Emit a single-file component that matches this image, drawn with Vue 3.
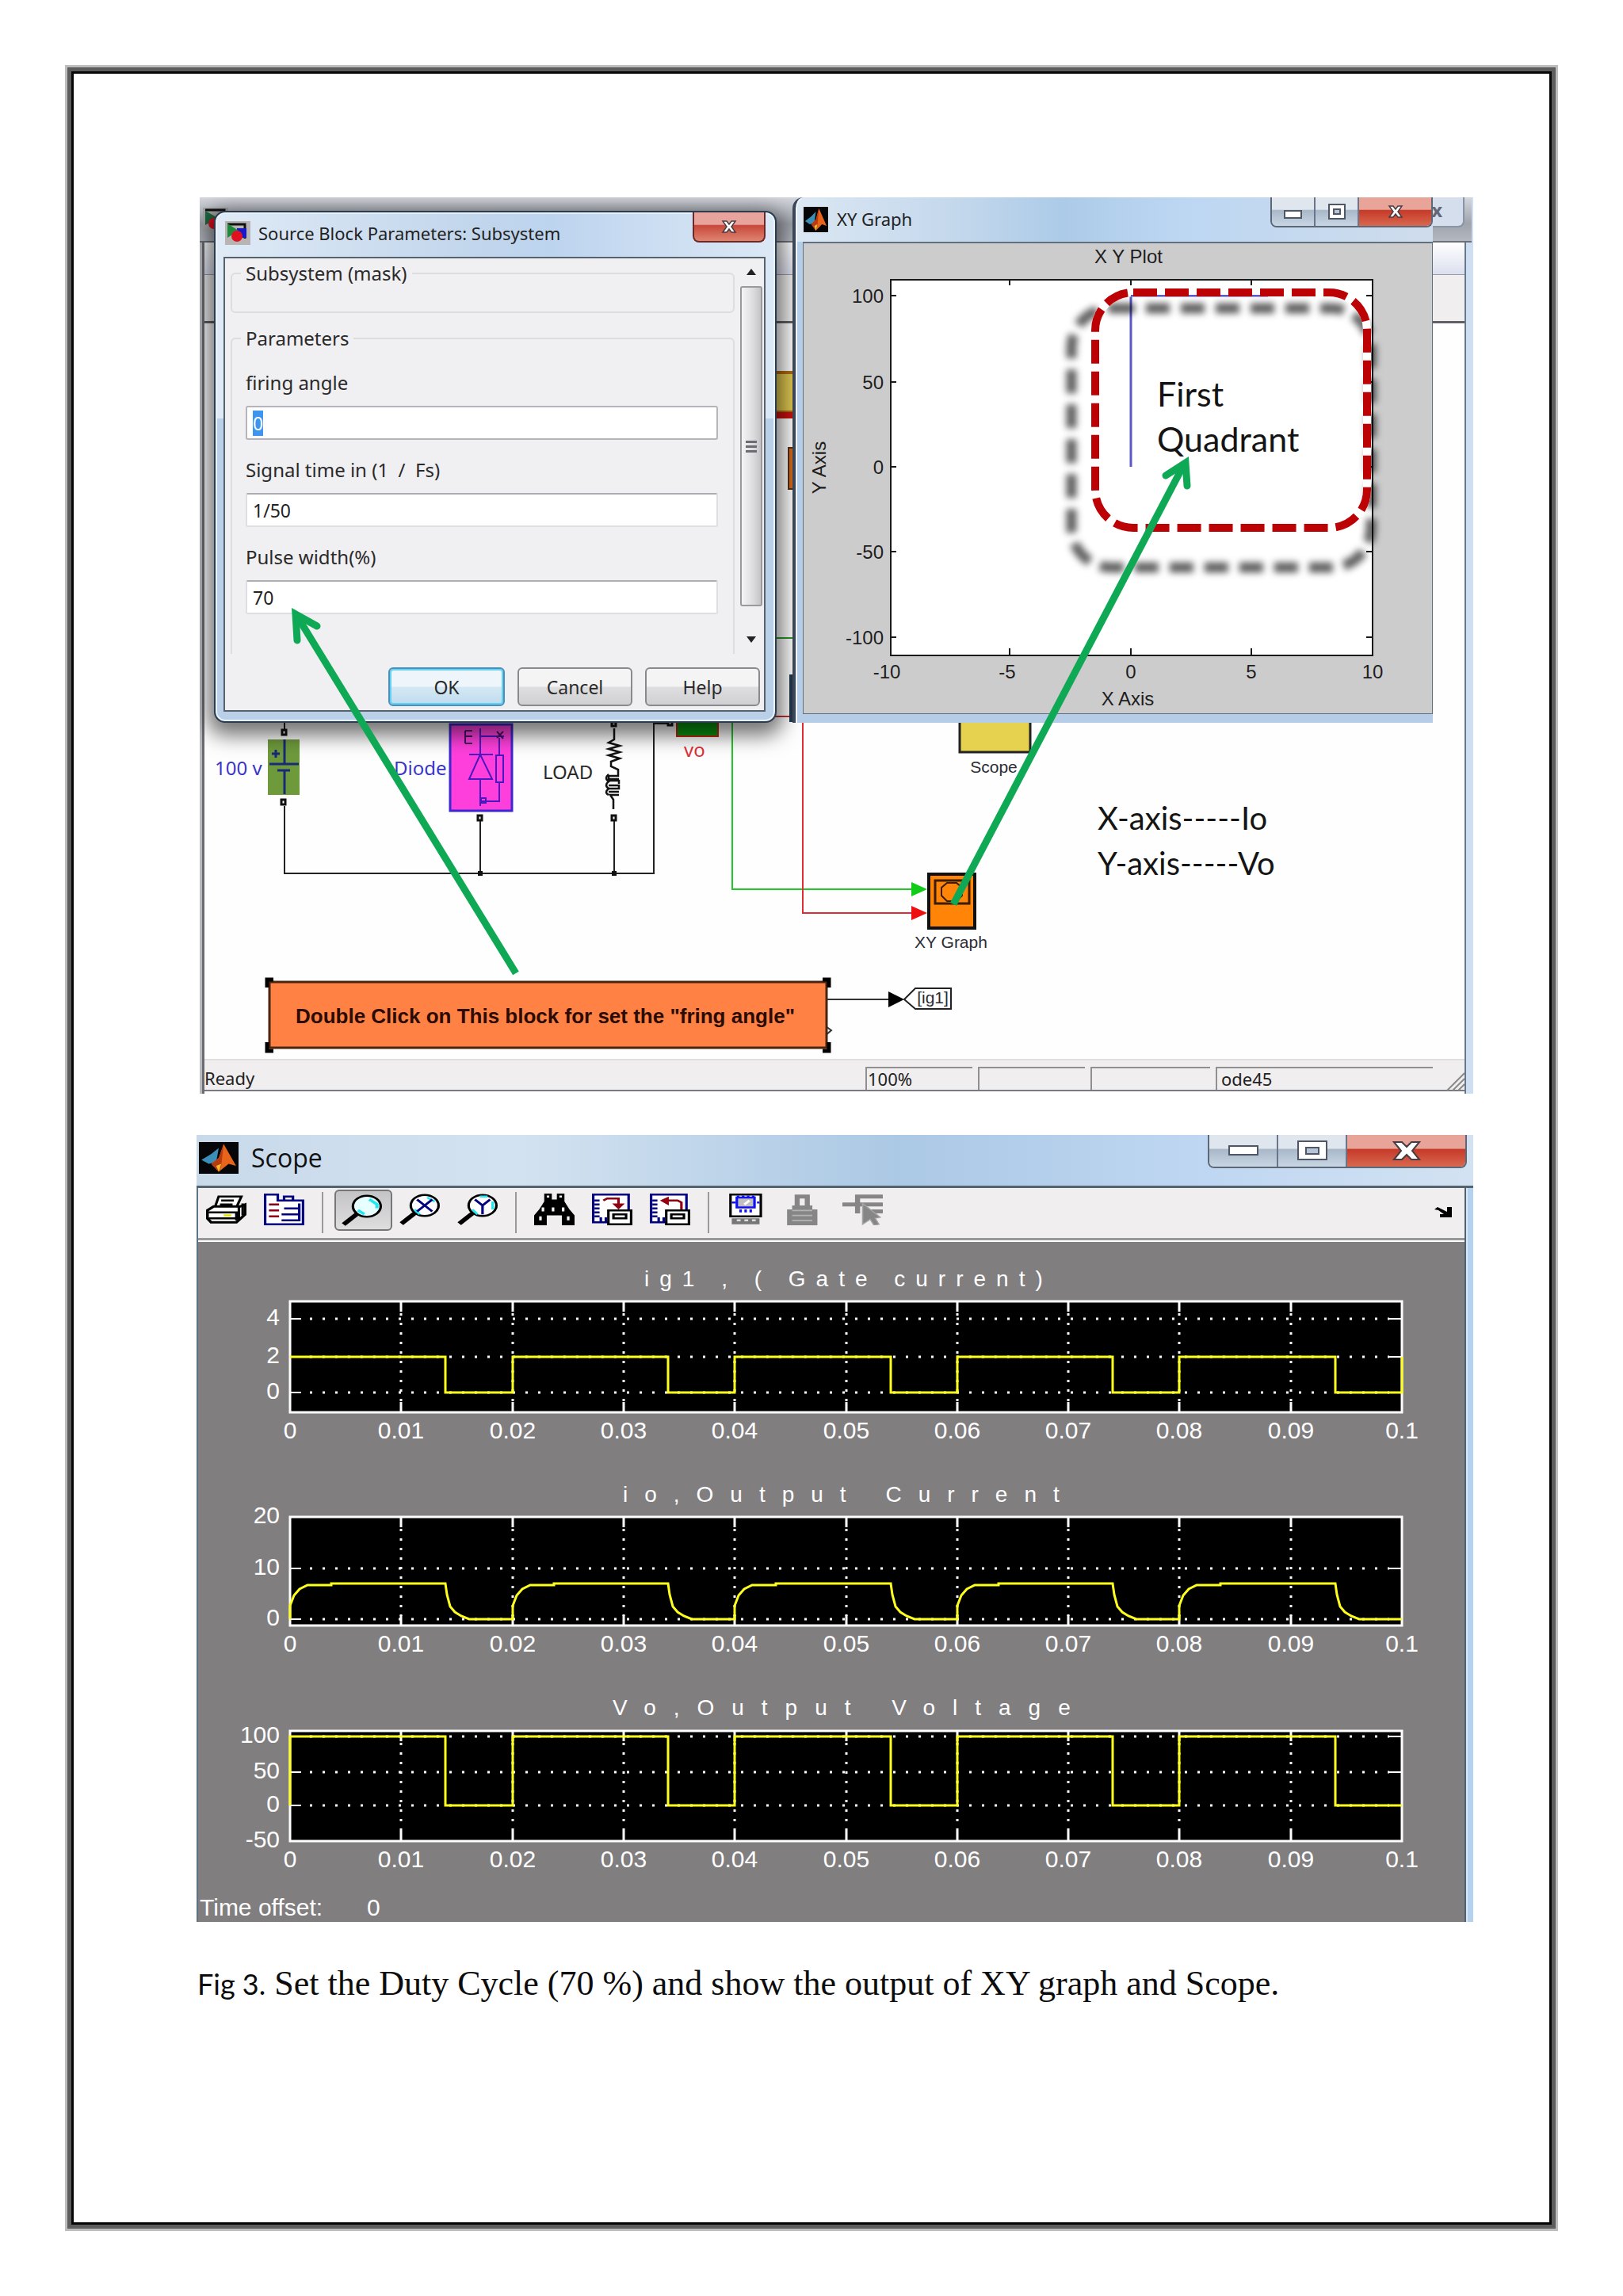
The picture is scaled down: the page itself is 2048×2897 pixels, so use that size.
<script setup>
import { onMounted, ref } from 'vue'

const fields = ref([
  { id: 'firing', label: 'firing angle', value: '0' },
  { id: 'period', label: 'Signal time in (1  /  Fs)', value: '1/50' },
  { id: 'width', label: 'Pulse width(%)', value: '70' }
])
const statusCells = [
  { text: '100%', cls: 'zoomlevel' },
  { text: '', cls: 'blank' },
  { text: '', cls: 'blank2' },
  { text: 'ode45', cls: 'solver' }
]

onMounted(() => {
  const first = document.getElementById('firing')
  first.focus({ preventScroll: true })
  first.select()
})

/* XY plot ticks; negative labels are centred on their digits */
const xyX = [
  { t: '-10', x: 1124, lx: 1119 }, { t: '-5', x: 1274, lx: 1271 }, { t: '0', x: 1427, lx: 1427 },
  { t: '5', x: 1579, lx: 1579 }, { t: '10', x: 1732, lx: 1732 }
]
const xyY = [
  { t: '100', y: 373 }, { t: '50', y: 482 }, { t: '0', y: 589 }, { t: '-50', y: 696 }, { t: '-100', y: 804 }
]

/* Scope traces */
const X0 = 366
const STEP = 140.3
const XE = 1769
const at = n => Math.round(X0 + n * STEP)
const ticks = ['0', '0.01', '0.02', '0.03', '0.04', '0.05', '0.06', '0.07', '0.08', '0.09', '0.1']

function square(hi, lo) {
  let d = ''
  for (let k = 0; k < 5; k++) {
    const a = at(2 * k)
    const b = at(2 * k + 1.4)
    const c = at(2 * k + 2)
    d += `${k ? 'L' : 'M'}${a} ${k ? lo : hi}V${hi}H${b}V${lo}H${c}`
  }
  return d
}
function rounded(hi, lo) {
  let d = ''
  for (let k = 0; k < 5; k++) {
    const a = at(2 * k)
    const b = at(2 * k + 1.4)
    const c = at(2 * k + 2)
    d += `${k ? 'L' : 'M'}${a} ${lo}V${lo - 17}L${a + 5} ${lo - 30}L${a + 12} ${hi + 7}L${a + 22} ${hi + 2}H${a + 52}V${hi}H${b}`
    d += `L${b + 2} ${hi + 14}L${b + 6} ${hi + 29}L${b + 12} ${hi + 36}L${b + 20} ${hi + 41}L${b + 30} ${lo}H${c}`
  }
  return d
}
const plots = [
  {
    title: 'ig1 , ( Gate current)', tx: 813, ty: 1623, cls: 'tight', top: 1642, bottom: 1782, lx: 1815,
    ys: [{ t: '4', y: 1664 }, { t: '2', y: 1712 }, { t: '0', y: 1757 }], trace: square(1712, 1757) + 'V1712'
  },
  {
    title: 'io,Output Current', tx: 786, ty: 1895, cls: 'loose', top: 1914, bottom: 2051, lx: 2084,
    ys: [{ t: '20', y: 1914, edge: true }, { t: '10', y: 1979 }, { t: '0', y: 2043 }], trace: rounded(1998, 2043)
  },
  {
    title: 'Vo,Output Voltage', tx: 773, ty: 2164, cls: 'looser', top: 2184, bottom: 2323, lx: 2356,
    ys: [{ t: '100', y: 2191 }, { t: '50', y: 2236 }, { t: '0', y: 2278 }, { t: '-50', y: 2323, edge: true }],
    trace: 'M366 2278' + square(2191, 2278).replace('M', 'L')
  }
]
</script>

<template>
  <main class="page">
    <article class="sheet">
      <section class="model" aria-label="Simulink model">
        <header class="model-title">
          <svg class="sl-icon back-icon" viewBox="0 0 32 30" aria-hidden="true">
            <rect width="32" height="30" fill="#a9a9a9" /><path d="M3 3h24v20" fill="none" stroke="#111" stroke-width="3" />
            <path d="M3 4v18l16-9z" fill="#1d6b42" /><circle cx="14" cy="20" r="7" fill="#e01020" />
          </svg>
          <span class="ghost-close">x</span>
        </header>
        <div class="model-menu"></div>
        <div class="model-tools"></div>
        <div class="canvas">
          <svg class="diagram" viewBox="258 409 1590 928" width="1590" height="928">
            <g fill="none" stroke-width="2">
              <rect x="970" y="471" width="40" height="50" fill="#e0c850" stroke="#b06a10" stroke-width="4" />
              <path d="M970 525H1010" stroke="#c81010" stroke-width="8" />
              <rect x="995" y="566" width="20" height="52" fill="#d2691e" stroke="#553015" />
              <path d="M970 806H1010" stroke="#2a9a2a" /><path d="M970 905H1010" stroke="#c03030" />
              <path d="M998 852V912" stroke="#24384e" stroke-width="4" />
              <path d="M359 905V921M359 1018V1103H825V914H848" stroke="#222" />
              <path d="M606 1037V1103M775 1037V1103" stroke="#222" />
              <g stroke="#111" stroke-width="3" fill="#fff">
                <rect x="356" y="922" width="5" height="6" /><rect x="355" y="1010" width="5" height="6" />
                <rect x="603" y="1030" width="5" height="6" /><rect x="772" y="1030" width="5" height="6" />
                <rect x="772" y="912" width="5" height="5" /><rect x="843" y="911" width="5" height="5" />
              </g>
              <path d="M603 1100h6v6h-6zM772 1100h6v6h-6z" fill="#111" />
              <rect x="338" y="934" width="40" height="70" fill="#6f9a3c" />
              <path d="M359 934V964M340 965H377M350 973H366M359 973V1003M343 952H353M348 947V957" stroke="#182a78" stroke-width="3" />
              <rect x="568" y="915" width="78" height="109" fill="#ff3fdc" stroke="#3a28d0" stroke-width="3" />
              <g stroke="#4a18c0" stroke-width="2">
                <path d="M606 920V953M592 953H622M606 953L592 984H621ZM606 984V1018M606 930H636M630 932V953M606 1012H630V989" />
                <rect x="626" y="954" width="9" height="34" /><rect x="607" y="1008" width="6" height="6" />
              </g>
              <path d="M587 923h9M587 930h9M587 939h9M587 923v16M627 924l8 9M635 924l-8 8" stroke="#4a1060" />
              <path d="M775 920V934L768 938L782 942L768 946L782 950L768 954L782 958L771 962V968L780 972V980H768V984H781M768 986H781V990M768 992H781V996H768M768 1000H781M781 1004H770L774 1010V1022" stroke="#111" stroke-width="2.5" />
              <path d="M768 978q-6 5 0 9q-6 5 0 9q-6 5 0 8" stroke="#111" stroke-width="2.5" />
              <rect x="854" y="905" width="52" height="25" fill="#0a9410" stroke="#c02810" />
              <path d="M924 905V1123H1152" stroke="#20c828" /><path d="M1013 905V1153H1152" stroke="#e02c34" />
              <path d="M1150 1114L1170 1123L1150 1132Z" fill="#10cc18" /><path d="M1150 1144L1170 1153L1150 1162Z" fill="#ee1010" />
              <rect x="1172" y="1104" width="58" height="68" fill="#ff8408" stroke="#111" stroke-width="4" />
              <rect x="1180" y="1112" width="43" height="29" stroke="#3a1c00" stroke-width="3" />
              <path d="M1195 1115H1207L1214 1121V1131L1207 1138H1195L1188 1131V1121Z" stroke="#3a1c00" />
              <rect x="1211" y="900" width="89" height="50" fill="#e6d24e" stroke="#222" stroke-width="3" />
              <path d="M1043 1262H1122" stroke="#333" /><path d="M1121 1252L1141 1262L1121 1272Z" fill="#000" />
              <path d="M1141 1262L1155 1248H1200V1274H1155Z" fill="#fff" stroke="#222" />
              <path d="M1042 1296L1049 1301L1042 1307" stroke="#333" />
              <rect x="340" y="1240" width="703" height="83" fill="#ff8143" stroke="#4a2410" stroke-width="3" />
              <path d="M337 1247V1237H345M1038 1237H1046V1247M337 1316V1327H345M1038 1327H1046V1316" stroke="#000" stroke-width="5" />
            </g>
            <text x="271" y="979" class="blk blue">100 v</text>
            <text x="497" y="979" class="blk blue">Diode</text>
            <text x="685" y="984" class="blk">LOAD</text>
            <text x="863" y="956" class="blk red">vo</text>
            <text x="1254" y="976" class="cap mid">Scope</text>
            <text x="1200" y="1197" class="cap mid">XY Graph</text>
            <text x="1177" y="1267" class="cap mid">[ig1]</text>
            <text x="688" y="1292" class="note mid">Double Click on This block for set the "fring angle"</text>
          </svg>
        </div>
        <footer class="status">
          <span class="ready">Ready</span>
          <span v-for="c in statusCells" :key="c.cls" class="cell" :class="c.cls">{{ c.text }}</span>
          <svg class="grip" viewBox="0 0 24 24" aria-hidden="true"><path d="M2 24L24 2M9 24L24 9M16 24L24 16" stroke="#8a8a8a" stroke-width="2" /></svg>
        </footer>

        <form class="dialog" aria-label="Source Block Parameters" @submit.prevent>
          <header class="dialog-title">
            <svg class="sl-icon" viewBox="0 0 32 30" aria-hidden="true">
              <rect width="32" height="30" fill="#b8b4b4" /><path d="M3 4h22v18" fill="none" stroke="#111" stroke-width="3" />
              <rect x="15" y="9" width="12" height="12" fill="#1818c8" /><path d="M3 3v18l14-9z" fill="#1d8a3a" /><circle cx="15" cy="19" r="7" fill="#e01020" />
            </svg>
            <span>Source Block Parameters: Subsystem</span>
            <button type="button" class="shut" aria-label="Close">
              <svg viewBox="0 0 22 18" width="22" height="18"><path d="M3 2h5l3 4 3-4h5l-5 7 5 7h-5l-3-4-3 4H3l5-7z" fill="#fff" stroke="#4a3c44" stroke-width="1.5" /></svg>
            </button>
          </header>
          <div class="client">
            <div class="scroller">
              <div class="groups">
                <fieldset class="mask"><legend>Subsystem (mask)</legend></fieldset>
                <fieldset class="params">
                  <legend>Parameters</legend>
                  <div v-for="f in fields" :key="f.id" class="field">
                    <label :for="f.id">{{ f.label }}</label>
                    <input :id="f.id" v-model="f.value" type="text" />
                  </div>
                </fieldset>
              </div>
              <div class="bar" aria-hidden="true">
                <svg viewBox="0 0 12 8" width="12" height="8"><path d="M0 8L6 0L12 8Z" fill="#222" /></svg>
                <div class="thumb"><i></i><i></i><i></i></div>
                <svg class="down" viewBox="0 0 12 8" width="12" height="8"><path d="M0 0L6 8L12 0Z" fill="#222" /></svg>
              </div>
            </div>
            <div class="actions">
              <button type="submit" class="ok">OK</button>
              <button type="button">Cancel</button>
              <button type="button">Help</button>
            </div>
          </div>
        </form>

        <section class="xy" aria-label="XY Graph">
          <header class="xy-title">
            <svg class="ml" viewBox="0 0 16 16" preserveAspectRatio="none" aria-hidden="true">
              <rect width="16" height="16" fill="#060608" /><path d="M1 9L5 6L8 3L7 10L4 11Z" fill="#3a8fb8" />
              <path d="M10 1L15 12L12 11L8 15L5 11L8 8Z" fill="#e8641a" /><path d="M8 8L10 1L9 12L8 15L5 11Z" fill="#b83a10" /><path d="M7 12L9 11L8 15Z" fill="#f0c030" />
            </svg>
            <span>XY Graph</span>
            <div class="wins">
              <button type="button" aria-label="Minimize"><svg viewBox="0 0 24 20" width="24" height="20"><rect x="1" y="9" width="21" height="9" fill="#fff" stroke="#4f5666" stroke-width="2" /></svg></button>
              <button type="button" aria-label="Maximize"><svg viewBox="0 0 24 20" width="24" height="20"><rect x="2" y="1" width="20" height="18" fill="#fff" stroke="#4f5666" stroke-width="2" /><rect x="8" y="7" width="8" height="6" fill="#b6c4d8" stroke="#4f5666" stroke-width="2" /></svg></button>
              <button type="button" class="x" aria-label="Close"><svg viewBox="0 0 22 18" width="22" height="18"><path d="M3 2h5l3 4 3-4h5l-5 7 5 7h-5l-3-4-3 4H3l5-7z" fill="#fff" stroke="#4a3c44" stroke-width="1.5" /></svg></button>
            </div>
          </header>
          <div class="xy-client">
            <svg viewBox="1014 307 794 594" width="794" height="594">
              <rect x="1124" y="353" width="608" height="474" fill="#fff" stroke="#1a1a1a" stroke-width="2" />
              <g stroke="#1a1a1a" stroke-width="2">
                <path v-for="t in xyX" :key="t.t" :d="`M${t.x} 353v7M${t.x} 827v-9`" />
                <path v-for="t in xyY" :key="t.t" :d="`M1124 ${t.y}h7M1732 ${t.y}h-8`" />
              </g>
              <path d="M1427 589V373H1600" fill="none" stroke="#5a58c8" stroke-width="3" />
              <text v-for="t in xyY" :key="'y' + t.t" x="1115" :y="t.y + 9" class="ax end">{{ t.t }}</text>
              <text v-for="t in xyX" :key="'x' + t.t" :x="t.lx" y="856" class="ax mid">{{ t.t }}</text>
              <text x="1424" y="332" class="ax mid">X Y Plot</text>
              <text x="1423" y="890" class="ax mid">X Axis</text>
              <text transform="translate(1042 590) rotate(-90)" class="ax mid">Y Axis</text>
            </svg>
          </div>
        </section>

        <svg class="overlay" viewBox="252 249 1606 1131" width="1606" height="1131">
          <defs><filter id="soft" x="-10%" y="-10%" width="120%" height="120%"><feGaussianBlur stdDeviation="4" /></filter></defs>
          <rect x="1352" y="389" width="378" height="327" rx="50" fill="none" stroke="#000" stroke-opacity=".62" stroke-width="13" stroke-dasharray="30 14" filter="url(#soft)" />
          <rect x="1382" y="369" width="343" height="297" rx="48" fill="none" stroke="#fff" stroke-width="10" />
          <path d="M1427 373H1600" stroke="#5a58c8" stroke-width="2" />
          <rect x="1382" y="369" width="343" height="297" rx="48" fill="none" stroke="#bc0205" stroke-width="10" stroke-dasharray="30 10" />
          <text x="1460" y="513" class="callout">First</text>
          <text x="1460" y="570" class="callout">Quadrant</text>
          <text x="1385" y="1047" class="axes-note">X-axis-----Io</text>
          <text x="1385" y="1104" class="axes-note">Y-axis-----Vo</text>
          <g fill="none" stroke="#0fa955" stroke-width="9">
            <path d="M651 1228L374 776" /><path d="M375 808L373 775L400 790" stroke-linecap="round" />
            <path d="M1203 1141L1494 586" /><path d="M1471 600L1496 584L1498 613" stroke-linecap="round" />
          </g>
        </svg>
      </section>

      <section class="scope" aria-label="Scope">
        <header class="scope-title">
          <svg class="ml" viewBox="0 0 16 16" preserveAspectRatio="none" aria-hidden="true">
            <rect width="16" height="16" fill="#060608" /><path d="M1 9L5 6L8 3L7 10L4 11Z" fill="#3a8fb8" />
            <path d="M10 1L15 12L12 11L8 15L5 11L8 8Z" fill="#e8641a" /><path d="M8 8L10 1L9 12L8 15L5 11Z" fill="#b83a10" /><path d="M7 12L9 11L8 15Z" fill="#f0c030" />
          </svg>
          <span>Scope</span>
          <div class="wins big">
            <button type="button" aria-label="Minimize"><svg viewBox="0 0 38 14" width="38" height="14"><rect x="1" y="1" width="36" height="11" fill="#fff" stroke="#4f5666" stroke-width="2" /></svg></button>
            <button type="button" aria-label="Maximize"><svg viewBox="0 0 38 26" width="38" height="26"><rect x="1" y="1" width="36" height="23" fill="#fff" stroke="#4f5666" stroke-width="2" /><rect x="11" y="9" width="16" height="8" fill="#b6c4d8" stroke="#4f5666" stroke-width="2" /></svg></button>
            <button type="button" class="x" aria-label="Close"><svg viewBox="0 0 36 26" width="36" height="26"><path d="M2 2h10l6 6 6-6h10l-9 11 9 11H24l-6-6-6 6H2l9-11z" fill="#fff" stroke="#4a3c44" stroke-width="2" /></svg></button>
          </div>
        </header>
        <div class="toolbar">
          <button type="button" aria-label="Print">
            <svg viewBox="0 0 16 16" preserveAspectRatio="none">
              <path d="M5 1.5h9L12 7H3.500z" fill="#fff" stroke="#000" /><path d="M6 3.500h5M5.500 5.500h5" stroke="#000" />
              <path d="M.5 8.500L3 6.500h10.500l2-1v5L12 14.500H2L.5 12.500z" fill="#fff" stroke="#000" stroke-width="1.2" />
              <path d="M1 9.500h11v4M1 12.500h11M13 6v7M14.500 5v6" stroke="#000" fill="none" /><path d="M7 11h3" stroke="#e8e000" />
            </svg>
          </button>
          <button type="button" aria-label="Parameters">
            <svg viewBox="0 0 16 16" preserveAspectRatio="none">
              <path d="M.5.5h5v3h10v12H.5zM8 3V1.500h3.500V3" fill="#fff" stroke="#000080" /><path d="M2 5.500h4M2 8.500h4M2 11.500h4" stroke="#900010" />
              <path d="M8 7.500h6M7 10.500h7M7 13.500h7M14 5v9" stroke="#000080" />
            </svg>
          </button>
          <i class="sep"></i>
          <button type="button" class="on" aria-label="Zoom">
            <svg viewBox="0 0 16 16" preserveAspectRatio="none">
              <ellipse cx="10" cy="6" rx="5.500" ry="5.300" fill="#e8ffff" stroke="#000" /><path d="M11 2.500l3 2.500v2M6.500 8l2.500 2" stroke="#20e8f0" stroke-width="1.300" fill="none" /><path d="M6 10L.8 15.200" stroke="#000" stroke-width="2" />
            </svg>
          </button>
          <button type="button" aria-label="Zoom X">
            <svg viewBox="0 0 16 16" preserveAspectRatio="none">
              <ellipse cx="10" cy="6" rx="5.500" ry="5.300" fill="#fff" stroke="#000" /><path d="M11 2l3 2M6 8l2 2.500" stroke="#20e8f0" fill="none" /><path d="M7 3l6 6M13 3L7 9" stroke="#000080" /><path d="M6 10L.8 15.200" stroke="#000" stroke-width="2" />
            </svg>
          </button>
          <button type="button" aria-label="Zoom Y">
            <svg viewBox="0 0 16 16" preserveAspectRatio="none">
              <ellipse cx="10" cy="6" rx="5.500" ry="5.300" fill="#fff" stroke="#000" /><path d="M9 1.500h3M14 4v4M6 8l2 2.500" stroke="#20e8f0" fill="none" /><path d="M7 3l3 3 3-3M10 6v4.500" stroke="#000080" fill="none" /><path d="M6 10L.8 15.200" stroke="#000" stroke-width="2" />
            </svg>
          </button>
          <i class="sep"></i>
          <button type="button" aria-label="Autoscale">
            <svg viewBox="0 0 16 16" preserveAspectRatio="none">
              <path d="M4 0h3v3h2V0h3v4l2 4 2 3v5h-5v-5H5v5H0v-5l2-3 2-4z" fill="#000" /><path d="M5.500 1v1M10.500 1v1M3.500 7v2M7.500 7v2M11.500 7v2M2.500 11.500v2M13.500 11.500v2" stroke="#fff" />
            </svg>
          </button>
          <button type="button" aria-label="Save axes">
            <svg viewBox="0 0 16 16" preserveAspectRatio="none">
              <path d="M.5.500h14v14H.5z" fill="#fff" stroke="#000080" /><path d="M1 3.500h2M1 5.500h2M1 7.500h2M1 9.500h2M1 11.500h2M3.500 14v-2M5.500 14v-2" stroke="#000080" />
              <path d="M4.500 3.500L6 2.500h4.500v3" stroke="#900010" fill="none" /><path d="M8 5h5l-2.500 3z" fill="#900010" /><rect x="6.500" y="8.500" width="9" height="7" fill="#fff" stroke="#000" /><rect x="8.500" y="10.500" width="5" height="2" fill="#fff" stroke="#000" />
            </svg>
          </button>
          <button type="button" aria-label="Restore axes">
            <svg viewBox="0 0 16 16" preserveAspectRatio="none">
              <path d="M.5.500h14v14H.5z" fill="#fff" stroke="#000080" /><path d="M1 3.500h2M1 5.500h2M1 7.500h2M1 9.500h2M1 11.500h2M3.500 14v-2M5.500 14v-2" stroke="#000080" />
              <path d="M6 3.500h5l1.500 1v3.500" stroke="#900010" fill="none" /><path d="M7.500 1.500v4.500L4 3.500z" fill="#900010" /><rect x="6.500" y="8.500" width="9" height="7" fill="#fff" stroke="#000" /><rect x="8.500" y="10.500" width="5" height="2" fill="#fff" stroke="#000" />
            </svg>
          </button>
          <i class="sep"></i>
          <button type="button" aria-label="Floating scope">
            <svg viewBox="0 0 16 16" preserveAspectRatio="none">
              <rect x="1.500" y=".5" width="12" height="11" fill="#fff" stroke="#000" /><rect x="4" y="2" width="7" height="5" fill="#c0c0c0" stroke="#1010f0" /><path d="M4.500 1v1M6.500 1v1M8.500 1v1M10.500 1v1M5.500 8v1.500M7.500 8v1.500M9.500 8v1.500M2 4.500h1.500M12 4.500h1" stroke="#1010f0" />
              <path d="M7 5.500L9 3.500" stroke="#fff" /><path d="M2 12.500h11v3H2z" fill="#777" /><path d="M4 13.500h1.500M7 13.500h1.500M10 13.500h1.500" stroke="#ddd" />
            </svg>
          </button>
          <button type="button" aria-label="Lock axes">
            <svg viewBox="0 0 16 16" preserveAspectRatio="none">
              <path d="M5 7V1.500h4V7" fill="none" stroke="#868686" stroke-width="2" /><path d="M3 6h8v2h2v8H1V8h2z" fill="#868686" /><path d="M3 8.500h8M3 11h8M3 13.500h8" stroke="#b4b4b4" stroke-width=".7" />
            </svg>
          </button>
          <button type="button" aria-label="Signal selection">
            <svg viewBox="0 0 16 16" preserveAspectRatio="none">
              <path d="M5 1.500h11M0 5.500h16M6 1v9M8 9h8" stroke="#868686" stroke-width="2" fill="none" /><path d="M8 5l7 7-2 .5 1.500 3-2 .5-1.500-3-3 2.500z" fill="#868686" stroke="#a4a4a4" stroke-width=".5" />
            </svg>
          </button>
          <button type="button" class="dock" aria-label="Dock">
            <svg viewBox="0 0 24 14"><path d="M1 3L5 0L17 6V0H23V13H8V9H13L6 4Z" fill="#000" /></svg>
          </button>
        </div>
        <div class="traces">
          <svg viewBox="250 1567 1598 858">
            <g v-for="p in plots" :key="p.title">
              <rect :x="X0" :y="p.top" :width="XE - X0" :height="p.bottom - p.top" fill="#000" stroke="#fff" stroke-width="3" />
              <g stroke="#fff" stroke-width="2">
                <template v-for="n in 9" :key="n">
                  <path :d="`M${at(n)} ${p.top + 15}V${p.bottom - 12}`" stroke-dasharray="3 9" stroke-width="3" />
                  <path :d="`M${at(n)} ${p.top}v13M${at(n)} ${p.bottom}v-13`" stroke-width="3" />
                </template>
                <template v-for="y in p.ys" :key="y.t">
                  <path v-if="!y.edge" :d="`M${X0 + 25} ${y.y}H${XE - 16}`" stroke-dasharray="3 13" stroke-width="3" />
                  <path v-if="!y.edge" :d="`M${X0} ${y.y}h14M${XE} ${y.y}h-17`" />
                </template>
              </g>
              <path :d="p.trace" fill="none" stroke="#ffff1e" stroke-width="3" />
              <text :x="p.tx" :y="p.ty" class="heading" :class="p.cls">{{ p.title }}</text>
              <text v-for="y in p.ys" :key="'l' + y.t" x="353" :y="y.y + 8" class="num end">{{ y.t }}</text>
              <text v-for="(t, i) in ticks" :key="t" :x="at(i)" :y="p.lx" class="num mid">{{ t }}</text>
            </g>
            <text x="252" y="2417" class="num">Time offset:</text>
            <text x="463" y="2417" class="num">0</text>
          </svg>
        </div>
      </section>

      <p class="caption"><b>Fig 3.</b> Set the Duty Cycle (70 %) and show the output of XY graph and Scope.</p>
    </article>
  </main>
</template>

<style>
body { margin: 0; background: #fff; }
</style>

<style scoped>
* { box-sizing: border-box; }
.page { padding: 82px; min-height: 100vh; display: flex; flex-direction: column; }
.sheet {
  flex: 1; border: 3px solid #bdbdbd; padding: 164px 104px 80px 163px;
  box-shadow: inset 0 0 0 5px #5c5d5c, inset 0 0 0 8px #060606;
}
svg { display: block; }
button { font: inherit; color: inherit; padding: 0; margin: 0; }
.mid { text-anchor: middle; }
.end { text-anchor: end; }

/* model window */
.model {
  position: relative; margin: 0 0 52px 4px; height: 1131px; padding: 0 11px 3px 6px; display: flex; flex-direction: column;
  background: linear-gradient(90deg, #b9babd 0 3px, #6a6c70 3px 6px, transparent 6px calc(100% - 11px), #66788c calc(100% - 11px) calc(100% - 9px), #cfdef0 calc(100% - 9px)), #fff;
  font-family: "Noto Sans", sans-serif; overflow: hidden;
}
.model-title { height: 57px; margin: 0 -9px 0 -6px; background: linear-gradient(180deg, #d4d7de, #9fa3ab 60%, #b4b8c0); border-bottom: 2px solid #6c7078; display: flex; justify-content: space-between; }
.sl-icon { width: 32px; height: 30px; }
.back-icon { margin: 13px 0 0 4px; }
.ghost-close { width: 100px; height: 38px; margin-right: 9px; padding-right: 26px; text-align: right; border: 2px solid #8a94a4; border-top: 0; border-radius: 0 0 8px 8px; background: #d4deec; color: #667; font: bold 24px/32px "Noto Sans", sans-serif; }
.model-menu { height: 41px; background: linear-gradient(#fff, #dcdfee); border-bottom: 1px solid #9a9aa6; }
.model-tools { height: 61px; background: #f0eeef; border-bottom: 3px solid #606066; }
.canvas { flex: 1; overflow: hidden; background: #fefefe; }
.blk { font-size: 24px; fill: #2a2a2a; }
.blue { fill: #3a35c8; }
.red { fill: #dc3038; }
.cap { font: 21px "Liberation Sans", sans-serif; fill: #2c2c34; }
.note { font: bold 26px "Liberation Sans", sans-serif; fill: #2a0c04; }
.status { height: 41px; display: flex; gap: 7px; padding: 8px 0 0; background: #f0eeef; border-top: 2px solid #e0dedf; border-bottom: 2px solid #777c84; font-size: 22px; line-height: 28px; color: #222; }
.ready { flex: 1; }
.cell { border-left: 2px solid #909090; border-top: 2px solid #909090; line-height: 26px; padding-left: 1px; }
.zoomlevel { width: 135px; }
.blank { width: 135px; }
.blank2 { width: 151px; }
.solver { width: 274px; padding-left: 5px; }
.grip { width: 24px; height: 24px; margin: 6px 0 0 9px; }

/* parameter dialog */
.dialog {
  position: absolute; left: 18px; top: 17px; width: 710px; height: 646px; padding: 0 12px 12px 10px; display: flex; flex-direction: column;
  border: 2px solid #2c3c4c; border-radius: 14px; box-shadow: inset 0 0 0 2px #e6f2fc, 0 8px 26px 8px rgba(0, 0, 0, .55);
  background: linear-gradient(90deg, #dfeaf6, #c2d6ec 45%, #bdd4ef 60%, #dce8f5) top / 100% 260px no-repeat, #b9d0e8;
}
.dialog-title { height: 56px; display: flex; align-items: flex-start; gap: 10px; font: 22px/52px "Noto Sans", sans-serif; color: #222; }
.dialog-title .sl-icon { margin: 11px 0 0 2px; }
.shut { margin-left: auto; width: 92px; height: 38px; border: 2px solid #6a2a2a; border-top: 0; border-radius: 0 0 8px 8px; background: linear-gradient(#e8a49c 0 42%, #c8483a 46%, #de8470); display: grid; place-items: center; }
.client { flex: 1; border: 2px solid #56626e; background: #f0eff1; display: flex; flex-direction: column; color: #2a2a2a; font-size: 24px; }
.scroller { flex: 1; display: flex; gap: 7px; padding: 4px 2px 0 7px; }
.groups { flex: 1; display: flex; flex-direction: column; gap: 17px; }
fieldset { margin: 0; border: 2px solid #dcdde0; border-radius: 6px; padding: 0 19px 0 17px; min-width: 0; }
legend { margin-left: -6px; padding: 0 6px; line-height: 30px; }
.mask { height: 65px; }
.params { flex: 1; border-bottom: 0; border-radius: 6px 6px 0 0; padding-top: 3px; }
.field { margin-top: 23px; display: flex; flex-direction: column; gap: 14px; }
label { line-height: 30px; white-space: pre; }
input { width: 100%; height: 43px; border: 2px solid #dedfe3; border-top-color: #adadb3; border-radius: 3px; background: #fff; padding: 3px 7px; font: 23px/33px "Noto Sans", sans-serif; color: #222; outline: none; }
input:focus { border-color: #b4b4ba; }
input::selection { background: #3c96f0; color: #fff; }
.bar { width: 28px; display: flex; flex-direction: column; align-items: center; padding: 9px 0 14px; }
.thumb { flex: 1; width: 28px; margin: 14px 0 38px; border: 2px solid #9a9a9e; border-radius: 3px; background: linear-gradient(90deg, #f4f4f5, #dcdcde 60%, #c4c4c8); display: flex; flex-direction: column; align-items: center; justify-content: center; gap: 3px; }
.thumb i { width: 14px; height: 3px; background: #6c6c72; }
.actions { display: flex; justify-content: flex-end; gap: 16px; padding: 17px 5px 5px; font-size: 23px; }
.actions button { width: 145px; height: 49px; border: 2px solid #8a8a8e; border-radius: 6px; background: linear-gradient(#f4f4f4 0 48%, #dedee0 52%, #d0d0d4); }
.actions .ok { width: 147px; border-color: #4a90b8; box-shadow: inset 0 0 0 2px #64d0f4; background: linear-gradient(#eef6fb 0 48%, #d4e8f4 52%, #bedcee); }

/* XY Graph window */
.xy {
  position: absolute; left: 748px; top: 0; width: 808px; height: 663px; padding: 0 0 11px 9px; display: flex; flex-direction: column;
  border-left: 4px solid #3a4656; border-radius: 14px 0 0 0; box-shadow: inset 2px 0 #f2f8fd;
  background: linear-gradient(90deg, #dbe7f3, #c4d8ec 25%, #accbe8 42%, #bcd6f2 60%, #cfdcec) top / 100% 56px no-repeat, #b5cde6;
}
.xy-title { height: 56px; display: flex; align-items: flex-start; gap: 11px; font: 22px/54px "Noto Sans", sans-serif; color: #222; padding-left: 1px; }
.ml { width: 31px; height: 32px; margin-top: 12px; flex: none; }
.wins { margin-left: auto; display: flex; height: 38px; border: 2px solid #5c6878; border-top: 0; border-radius: 0 0 8px 8px; overflow: hidden; }
.wins button { width: 55px; height: 100%; border: 0; border-right: 2px solid #69758a; display: grid; place-items: center; background: linear-gradient(#dfe6ee 0 42%, #a9b8c8 46%, #c8d6e4); }
.wins .x { width: 91px; border-right: 0; background: linear-gradient(#e8a498 0 42%, #c63a28 46%, #d86850); }
.xy-client { border: 1px solid #62707e; border-top-width: 2px; background: #cdcccd; height: 596px; overflow: hidden; }
.ax { font: 24px "Liberation Sans", sans-serif; fill: #1e1e1e; }
.overlay { position: absolute; left: 0; top: 0; pointer-events: none; }
.callout { font: 43px Lato, sans-serif; fill: #141414; }
.axes-note { font: 40px Lato, sans-serif; fill: #141414; }

/* scope window */
.scope {
  display: flex; flex-direction: column; padding: 0 11px 0 2px;
  background: linear-gradient(90deg, #5c7484 0 2px, transparent 2px calc(100% - 11px), #50606c calc(100% - 11px) calc(100% - 9px), #d8e8f8 calc(100% - 9px) calc(100% - 7px), #b4d2ee calc(100% - 7px));
}
.scope-title { height: 67px; margin: 0 -11px 0 -2px; padding: 0 8px 0 3px; display: flex; align-items: flex-start; gap: 16px; border-bottom: 3px solid #53646e; font: 32px/58px "Open Sans", sans-serif; color: #111; background: linear-gradient(90deg, #c8d9ea, #d3e2f0 25%, #abc8e4 55%, #bed6f2 78%, #d3e2f2); }
.scope-title .ml { width: 50px; height: 40px; margin-top: 9px; }
.big { height: 42px; }
.big button { width: 87px; }
.big .x { width: 149px; }
.toolbar { height: 68px; display: flex; align-items: flex-start; gap: 22px; padding: 7px 15px 0 10px; background: #f0eeef; border-bottom: 2px solid #fff; box-shadow: inset 0 -3px #98989a; }
.toolbar button { width: 51px; height: 40px; border: 0; background: none; }
.toolbar svg { width: 51px; height: 40px; }
.toolbar .sep { width: 2px; height: 52px; background: #9a9a9c; margin-top: -2px; }
.toolbar .on { width: 73px; height: 52px; margin: -5px -13px 0 -8px; padding-left: 7px; border: 2px solid #77777a; border-radius: 6px; background: linear-gradient(#c4c4c6, #dededf); }
.toolbar .dock { width: 24px; height: 14px; margin: 17px 0 0 auto; }
.toolbar .dock svg { width: 24px; height: 14px; }
.traces { background: #817e80; }
.traces svg { width: 100%; height: auto; }
.num { font: 30px "Liberation Sans", sans-serif; fill: #fff; }
.heading { font: 28px "Liberation Sans", sans-serif; fill: #fff; }
.tight { letter-spacing: 13px; }
.loose { letter-spacing: 21px; }
.looser { letter-spacing: 22px; }

.caption { margin: 48px 0 0 1px; font: 44px/60px "Liberation Serif", serif; color: #0c0c0c; }
.caption b { font: 36px/60px Lato, sans-serif; }
</style>
